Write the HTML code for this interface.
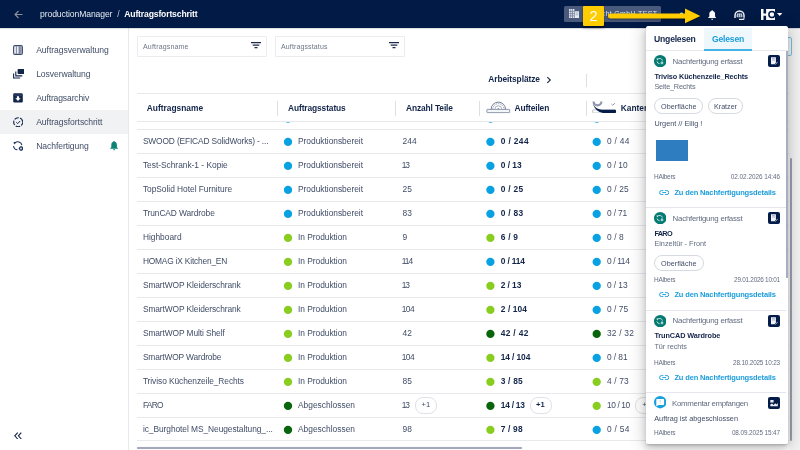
<!DOCTYPE html>
<html lang="de"><head><meta charset="utf-8"><title>productionManager / Auftragsfortschritt</title>
<style>
*{box-sizing:border-box;margin:0;padding:0}
html,body{width:800px;height:450px;overflow:hidden;background:#fff}
body{font-family:"Liberation Sans",sans-serif;font-size:8.4px;color:#414d66;position:relative}
.abs{position:absolute}
.tx{position:absolute;white-space:pre}
#wrap{position:absolute;left:0;top:0;width:800px;height:450px;will-change:transform}
#hdr{position:absolute;left:0;top:0;width:800px;height:27.6px;background:#011a46;box-shadow:0 0 1.5px rgba(20,20,60,.5)}
#side{position:absolute;left:0;top:0;width:128.5px;height:450px;background:#fff;border-right:1px solid #e6e8ec}
.navact{position:absolute;left:0;top:110px;width:128px;height:23.5px;background:#f1f2f4}
#main{position:absolute;left:129px;top:27px;width:671px;height:423px;background:#fff}
.flt{position:absolute;top:36px;height:20.5px;width:130px;border:1px solid #eaecf0;border-radius:1px;background:#fff}
.fbtn{position:absolute;left:740px;top:37px;width:51.5px;height:18.5px;border:1px solid #74c3e8;border-radius:2px;background:#f6f7f8}
#tbl{position:absolute;left:0;top:0;width:800px;height:450px}
.hline{position:absolute;left:136.5px;height:1px;background:#e8e9ec;width:652.3px}
.vsep{position:absolute;width:1px;background:#dcdfe5}
.dot{position:absolute;width:8.4px;height:8.4px;border-radius:50%}
.dot.b{background:#16a1e2}.dot.g{background:#8ccb22}.dot.d{background:#0a640c}
.chip{position:absolute;height:16.6px;width:22px;border:1px solid #dfe1e6;border-radius:8px;background:#fff}
.hscroll{position:absolute;left:137px;top:446.6px;width:385px;height:2px;border-radius:1px;background:#a3a9bb;box-shadow:0 0 1px #c5c9d6}
#pop{position:absolute;left:646px;top:26.3px;width:142px;height:417.3px;background:#fff;border-radius:2px;box-shadow:0 2px 3px -1px rgba(0,0,0,.22),0 4px 7px 1px rgba(0,0,0,.13),0 1px 16px 3px rgba(0,0,0,.16);overflow:hidden}
.tabact{background:#eef7fc}.tabline{background:#e6e8ec}.tabul{background:#45b2e6}
.pchip{border:1px solid #d5d9e0;border-radius:8px;background:#fff}
.psep{background:#e4e6eb}
.pimg{background:#2f7dc1}
.ptrack{background:#e9ebf1}.pthumb{background:#a7aec3}
.pill{position:absolute;left:564.2px;top:6px;width:97.3px;height:16px;border-radius:1.6px;background:#4a5a7c}
.ybox{border-radius:1px;position:absolute;left:583.4px;top:6px;width:20.5px;height:20.2px;background:#ffcc00;box-shadow:0 1.5px 3px rgba(0,0,0,.4)}
.ybox span{position:absolute;left:0;width:20.5px;top:1.9px;text-align:center;font-size:14.6px;line-height:16px;color:#fff}
.vscroll{position:absolute;left:790px;top:157.5px;width:2.2px;height:283px;background:#9ca1b3;border-radius:1px}
.rstrip{position:absolute;left:789px;top:27px;width:11px;height:423px;background:linear-gradient(90deg,#fafafa,#f2f2f2 40%)}
</style></head><body>
<div id="wrap">
<div id="main"></div><div class="rstrip"></div>
<div id="side">
<div class="navact"></div>
<span class="tx" style="top:45.00px;font-size:8.6px;line-height:10px;left:36.20px;color:#414d66;letter-spacing:-0.063px;">Auftragsverwaltung</span>
<span class="tx" style="top:69.20px;font-size:8.6px;line-height:10px;left:36.20px;color:#414d66;letter-spacing:-0.098px;">Losverwaltung</span>
<span class="tx" style="top:93.00px;font-size:8.6px;line-height:10px;left:36.20px;color:#414d66;letter-spacing:-0.149px;">Auftragsarchiv</span>
<span class="tx" style="top:117.00px;font-size:8.6px;line-height:10px;left:36.20px;color:#414d66;letter-spacing:-0.061px;">Auftragsfortschritt</span>
<span class="tx" style="top:141.20px;font-size:8.6px;line-height:10px;left:36.20px;color:#414d66;letter-spacing:-0.085px;">Nachfertigung</span>
<svg class="abs" style="left:13px;top:45px" width="10" height="10" viewBox="0 0 10 10"><rect x=".6" y=".6" width="8.8" height="8.8" rx="1.3" fill="#eef0f5" stroke="#3d4b70" stroke-width="1.1"/><rect x="6.1" y="1.2" width="2.7" height="7.6" fill="#8c96ad"/><path d="M3.4 1.2V8.8M6.1 1.2V8.8" stroke="#5d6a88" stroke-width=".8"/></svg>
<svg class="abs" style="left:12.5px;top:69px" width="11.5" height="9.6" viewBox="0 0 11.5 9.6"><rect x="4.6" y="0" width="6.9" height="5" rx=".8" fill="#13254a"/><path d="M2.8 2.4V6.9H9.3M.6 4.6V9H7.2" stroke="#13254a" stroke-width="1.1" fill="none"/></svg>
<svg class="abs" style="left:13px;top:93px" width="10" height="9.6" viewBox="0 0 10 9.6"><rect x=".2" y=".2" width="9.6" height="9.2" rx="1.2" fill="#13254a"/><path d="M.8 2.1H9.2" stroke="#41517a" stroke-width=".8"/><path d="M3.9 3.3H6.1V5.2H7.7L5 7.9L2.3 5.2H3.9Z" fill="#fff"/></svg>
<svg class="abs" style="left:12.8px;top:116.8px" width="10.4" height="10.4" viewBox="0 0 10.4 10.4"><circle cx="5.2" cy="5.2" r="4.5" fill="none" stroke="#13254a" stroke-width="1.1" stroke-dasharray="4.6 1.3" stroke-dashoffset="1"/><path d="M3.3 5.3L4.7 6.6L7.2 4" stroke="#13254a" stroke-width="1" fill="none"/></svg>
<svg class="abs" style="left:12.8px;top:140.5px" width="10.6" height="10.6" viewBox="0 0 10.6 10.6"><path d="M1.9 2.1A4.1 4.1 0 0 1 8.9 4.2M.6 5A4.1 4.1 0 0 0 4.4 8.8" stroke="#1d3260" stroke-width="1.05" fill="none"/><path d="M.6 .9L3.1 1.3L1 3.4Z" fill="#13254a"/><circle cx="8" cy="7.5" r="1.55" fill="#fff" stroke="#1d3260" stroke-width="1.2"/><path d="M8 5.2V9.8M5.7 7.5H10.3" stroke="#1d3260" stroke-width=".7"/><circle cx="8" cy="7.5" r=".8" fill="#fff"/></svg>
<svg class="abs" style="left:110.2px;top:141.2px" width="8.2" height="9.4" viewBox="0 0 8.2 9.4"><path d="M4.1 0C4.6 0 4.9 .3 4.9 .8C6.2 1.2 6.9 2.3 6.9 3.8V6.2L8 7.3V7.8H.2V7.3L1.3 6.2V3.8C1.3 2.3 2 1.2 3.3 .8C3.3 .3 3.6 0 4.1 0ZM3.1 8.3H5.1C5.1 8.9 4.7 9.3 4.1 9.3C3.5 9.3 3.1 8.9 3.1 8.3Z" fill="#0b8374"/></svg>
<svg class="abs" style="left:14px;top:431.5px" width="8" height="7.6" viewBox="0 0 8 7.6"><path d="M3.7 .6L.8 3.8L3.7 7M7.3 .6L4.4 3.8L7.3 7" stroke="#13254a" stroke-width="1.1" fill="none"/></svg>

</div>
<div class="flt" style="left:136.5px"></div><div class="flt" style="left:274.5px"></div>
<span class="tx" style="top:42.60px;font-size:7px;line-height:8px;left:143.00px;color:#6c7688;letter-spacing:0.173px;">Auftragsname</span>
<span class="tx" style="top:42.60px;font-size:7px;line-height:8px;left:281.00px;color:#6c7688;letter-spacing:0.127px;">Auftragsstatus</span>
<svg class="abs" style="left:251px;top:42.4px" width="10" height="7" viewBox="0 0 10 7"><path d="M0 .7H10M1.7 3.2H8.3M3.5 5.7H6.5" stroke="#1c2b4a" stroke-width="1.3" fill="none"/></svg>
<svg class="abs" style="left:388.8px;top:42.4px" width="10" height="7" viewBox="0 0 10 7"><path d="M0 .7H10M1.7 3.2H8.3M3.5 5.7H6.5" stroke="#1c2b4a" stroke-width="1.3" fill="none"/></svg>
<div class="fbtn"></div>
<div id="tbl">
<div class="hline" style="top:93px"></div><div class="hline" style="top:121px"></div><div class="hline" style="top:129px"></div>
<div class="vsep" style="left:277.0px;top:101px;height:15px"></div>
<div class="vsep" style="left:395.0px;top:101px;height:15px"></div>
<div class="vsep" style="left:479.0px;top:101px;height:15px"></div>
<div class="vsep" style="left:585.5px;top:101px;height:15px"></div>
<div class="vsep" style="left:585.5px;top:74px;height:12.5px"></div>
<span class="tx" style="top:102.50px;font-size:8.4px;line-height:10px;left:146.75px;font-weight:700;color:#13254a;">Auftragsname</span>
<span class="tx" style="top:102.50px;font-size:8.4px;line-height:10px;left:288.00px;font-weight:700;color:#13254a;letter-spacing:-0.105px;">Auftragsstatus</span>
<span class="tx" style="top:102.50px;font-size:8.4px;line-height:10px;left:406.00px;font-weight:700;color:#13254a;letter-spacing:-0.114px;">Anzahl Teile</span>
<span class="tx" style="top:74.00px;font-size:8.4px;line-height:10px;left:488.25px;font-weight:700;color:#13254a;letter-spacing:-0.070px;">Arbeitsplätze</span>
<span class="tx" style="top:102.50px;font-size:8.4px;line-height:10px;left:514.50px;font-weight:700;color:#13254a;letter-spacing:-0.135px;">Aufteilen</span>
<span class="tx" style="top:102.50px;font-size:8.4px;line-height:10px;left:620.75px;font-weight:700;color:#13254a;">Kanten</span>
<svg class="abs" style="left:546px;top:75.5px" width="6" height="8" viewBox="0 0 6 8"><path d="M1.3 1.2L4.3 4L1.3 6.8" stroke="#13254a" stroke-width="1.1" fill="none"/></svg>
<svg class="abs" style="left:485.5px;top:101px" width="25" height="12.5" viewBox="0 0 25 12.5"><rect x=".9" y="8.4" width="22.8" height="3.2" rx=".4" fill="#f4f5f8" stroke="#77819a" stroke-width=".8"/><path d="M5.1 8.3A7.2 7.2 0 0 1 19.5 8.3" fill="none" stroke="#66718b" stroke-width=".9"/><path d="M6.7 8.3A5.6 5.6 0 0 1 17.9 8.3" fill="none" stroke="#7a849c" stroke-width=".8" stroke-dasharray="1.3 .8"/><path d="M8.8 8.3A3.5 3.5 0 0 1 15.8 8.3" fill="none" stroke="#8690a6" stroke-width=".7"/><circle cx="12.3" cy="7.7" r=".7" fill="#7a849c"/></svg>
<svg class="abs" style="left:592px;top:100.5px" width="24.5" height="12.5" viewBox="0 0 24.5 12.5"><rect x=".6" y="8.9" width="23" height="3.1" rx=".8" fill="#fff" stroke="#a5adc0" stroke-width=".7"/><path d="M1.6 .4A3.9 3.9 0 0 0 9.4 .4" fill="none" stroke="#8f98b0" stroke-width="2.2"/><path d="M.6 .8C1.4 5.8 5.5 8.5 10 8.7H23.2A.8 .8 0 0 1 24 9.5V11.2A.8 .8 0 0 1 23.2 12H11C6.5 11.4 1.6 8 .6 .8Z" fill="#041c49"/><path d="M19.4 3L20.7 4.2L23 2.2" stroke="#6f7a93" stroke-width=".8" fill="none"/></svg>

<svg class="abs" style="left:283px;top:113px" width="12" height="12"><clipPath id="c288"><rect x="0" y="9.00" width="12" height="12"/></clipPath><circle cx="5.00" cy="5.60" r="4.15" fill="#08a1e1" clip-path="url(#c288)"/></svg>
<svg class="abs" style="left:485px;top:113px" width="12" height="12"><clipPath id="c490"><rect x="0" y="9.00" width="12" height="12"/></clipPath><circle cx="5.50" cy="5.60" r="4.15" fill="#08a1e1" clip-path="url(#c490)"/></svg>
<svg class="abs" style="left:591px;top:113px" width="12" height="12"><clipPath id="c596"><rect x="0" y="9.00" width="12" height="12"/></clipPath><circle cx="5.75" cy="5.60" r="4.15" fill="#08a1e1" clip-path="url(#c596)"/></svg>
<div class="hline" style="top:153px"></div>
<span class="tx" style="top:136.30px;font-size:8.4px;line-height:10px;left:142.90px;color:#414d66;letter-spacing:-0.150px;">SWOOD (EFICAD SolidWorks) - ...</span>
<svg class="abs" style="left:283px;top:136px" width="12" height="12"><circle cx="5.00" cy="5.90" r="4.15" fill="#08a1e1"/></svg>
<span class="tx" style="top:136.30px;font-size:8.4px;line-height:10px;left:298.00px;color:#414d66;letter-spacing:-0.012px;">Produktionsbereit</span>
<span class="tx" style="top:136.30px;font-size:8.4px;line-height:10px;left:402.50px;color:#414d66;letter-spacing:0.133px;">244</span>
<svg class="abs" style="left:485px;top:136px" width="12" height="12"><circle cx="5.40" cy="5.90" r="4.15" fill="#08a1e1"/></svg>
<span class="tx" style="top:136.30px;font-size:8.4px;line-height:10px;left:500.75px;font-weight:700;color:#13254a;letter-spacing:0.363px;">0 / 244</span>
<svg class="abs" style="left:591px;top:136px" width="12" height="12"><circle cx="5.70" cy="5.90" r="4.15" fill="#08a1e1"/></svg>
<span class="tx" style="top:136.30px;font-size:8.4px;line-height:10px;left:607.00px;color:#414d66;letter-spacing:0.266px;">0 / 44</span>
<div class="hline" style="top:177px"></div>
<span class="tx" style="top:160.30px;font-size:8.4px;line-height:10px;left:142.90px;color:#414d66;letter-spacing:-0.014px;">Test-Schrank-1 - Kopie</span>
<svg class="abs" style="left:283px;top:160px" width="12" height="12"><circle cx="5.00" cy="5.90" r="4.15" fill="#08a1e1"/></svg>
<span class="tx" style="top:160.30px;font-size:8.4px;line-height:10px;left:298.00px;color:#414d66;letter-spacing:-0.012px;">Produktionsbereit</span>
<span class="tx" style="top:160.30px;font-size:8.4px;line-height:10px;left:401.80px;color:#414d66;letter-spacing:-1.278px;">13</span>
<svg class="abs" style="left:485px;top:160px" width="12" height="12"><circle cx="5.40" cy="5.90" r="4.15" fill="#08a1e1"/></svg>
<span class="tx" style="top:160.30px;font-size:8.4px;line-height:10px;left:500.75px;font-weight:700;color:#13254a;letter-spacing:-0.034px;">0 / 13</span>
<svg class="abs" style="left:591px;top:160px" width="12" height="12"><circle cx="5.70" cy="5.90" r="4.15" fill="#08a1e1"/></svg>
<span class="tx" style="top:160.30px;font-size:8.4px;line-height:10px;left:607.00px;color:#414d66;letter-spacing:-0.074px;">0 / 10</span>
<div class="hline" style="top:201px"></div>
<span class="tx" style="top:184.30px;font-size:8.4px;line-height:10px;left:142.90px;color:#414d66;letter-spacing:-0.030px;">TopSolid Hotel Furniture</span>
<svg class="abs" style="left:283px;top:184px" width="12" height="12"><circle cx="5.00" cy="5.90" r="4.15" fill="#08a1e1"/></svg>
<span class="tx" style="top:184.30px;font-size:8.4px;line-height:10px;left:298.00px;color:#414d66;letter-spacing:-0.012px;">Produktionsbereit</span>
<span class="tx" style="top:184.30px;font-size:8.4px;line-height:10px;left:402.50px;color:#414d66;letter-spacing:0.172px;">25</span>
<svg class="abs" style="left:485px;top:184px" width="12" height="12"><circle cx="5.40" cy="5.90" r="4.15" fill="#08a1e1"/></svg>
<span class="tx" style="top:184.30px;font-size:8.4px;line-height:10px;left:500.75px;font-weight:700;color:#13254a;letter-spacing:0.266px;">0 / 25</span>
<svg class="abs" style="left:591px;top:184px" width="12" height="12"><circle cx="5.70" cy="5.90" r="4.15" fill="#08a1e1"/></svg>
<span class="tx" style="top:184.30px;font-size:8.4px;line-height:10px;left:607.00px;color:#414d66;letter-spacing:0.146px;">0 / 25</span>
<div class="hline" style="top:225px"></div>
<span class="tx" style="top:208.30px;font-size:8.4px;line-height:10px;left:142.90px;color:#414d66;letter-spacing:-0.099px;">TrunCAD Wardrobe</span>
<svg class="abs" style="left:283px;top:208px" width="12" height="12"><circle cx="5.00" cy="5.90" r="4.15" fill="#08a1e1"/></svg>
<span class="tx" style="top:208.30px;font-size:8.4px;line-height:10px;left:298.00px;color:#414d66;letter-spacing:-0.012px;">Produktionsbereit</span>
<span class="tx" style="top:208.30px;font-size:8.4px;line-height:10px;left:402.50px;color:#414d66;letter-spacing:0.172px;">83</span>
<svg class="abs" style="left:485px;top:208px" width="12" height="12"><circle cx="5.40" cy="5.90" r="4.15" fill="#08a1e1"/></svg>
<span class="tx" style="top:208.30px;font-size:8.4px;line-height:10px;left:500.75px;font-weight:700;color:#13254a;letter-spacing:0.266px;">0 / 83</span>
<svg class="abs" style="left:591px;top:208px" width="12" height="12"><circle cx="5.70" cy="5.90" r="4.15" fill="#08a1e1"/></svg>
<span class="tx" style="top:208.30px;font-size:8.4px;line-height:10px;left:607.00px;color:#414d66;letter-spacing:-0.174px;">0 / 71</span>
<div class="hline" style="top:249px"></div>
<span class="tx" style="top:232.30px;font-size:8.4px;line-height:10px;left:142.90px;color:#414d66;">Highboard</span>
<svg class="abs" style="left:283px;top:232px" width="12" height="12"><circle cx="5.00" cy="5.90" r="4.15" fill="#89cd20"/></svg>
<span class="tx" style="top:232.30px;font-size:8.4px;line-height:10px;left:298.00px;color:#414d66;letter-spacing:-0.030px;">In Produktion</span>
<span class="tx" style="top:232.30px;font-size:8.4px;line-height:10px;left:402.50px;color:#414d66;letter-spacing:0.078px;">9</span>
<svg class="abs" style="left:485px;top:232px" width="12" height="12"><circle cx="5.40" cy="5.90" r="4.15" fill="#89cd20"/></svg>
<span class="tx" style="top:232.30px;font-size:8.4px;line-height:10px;left:500.75px;font-weight:700;color:#13254a;letter-spacing:0.226px;">6 / 9</span>
<svg class="abs" style="left:591px;top:232px" width="12" height="12"><circle cx="5.70" cy="5.90" r="4.15" fill="#08a1e1"/></svg>
<span class="tx" style="top:232.30px;font-size:8.4px;line-height:10px;left:607.00px;color:#414d66;letter-spacing:0.101px;">0 / 8</span>
<div class="hline" style="top:273px"></div>
<span class="tx" style="top:256.30px;font-size:8.4px;line-height:10px;left:142.90px;color:#414d66;letter-spacing:-0.198px;">HOMAG iX Kitchen_EN</span>
<svg class="abs" style="left:283px;top:256px" width="12" height="12"><circle cx="5.00" cy="5.90" r="4.15" fill="#89cd20"/></svg>
<span class="tx" style="top:256.30px;font-size:8.4px;line-height:10px;left:298.00px;color:#414d66;letter-spacing:-0.030px;">In Produktion</span>
<span class="tx" style="top:256.30px;font-size:8.4px;line-height:10px;left:401.80px;color:#414d66;letter-spacing:-1.005px;">114</span>
<svg class="abs" style="left:485px;top:256px" width="12" height="12"><circle cx="5.40" cy="5.90" r="4.15" fill="#08a1e1"/></svg>
<span class="tx" style="top:256.30px;font-size:8.4px;line-height:10px;left:500.75px;font-weight:700;color:#13254a;letter-spacing:-0.159px;">0 / 114</span>
<svg class="abs" style="left:591px;top:256px" width="12" height="12"><circle cx="5.70" cy="5.90" r="4.15" fill="#08a1e1"/></svg>
<span class="tx" style="top:256.30px;font-size:8.4px;line-height:10px;left:607.00px;color:#414d66;letter-spacing:-0.367px;">0 / 114</span>
<div class="hline" style="top:297px"></div>
<span class="tx" style="top:280.30px;font-size:8.4px;line-height:10px;left:142.90px;color:#414d66;letter-spacing:-0.092px;">SmartWOP Kleiderschrank</span>
<svg class="abs" style="left:283px;top:280px" width="12" height="12"><circle cx="5.00" cy="5.90" r="4.15" fill="#89cd20"/></svg>
<span class="tx" style="top:280.30px;font-size:8.4px;line-height:10px;left:298.00px;color:#414d66;letter-spacing:-0.030px;">In Produktion</span>
<span class="tx" style="top:280.30px;font-size:8.4px;line-height:10px;left:401.80px;color:#414d66;letter-spacing:-1.278px;">13</span>
<svg class="abs" style="left:485px;top:280px" width="12" height="12"><circle cx="5.40" cy="5.90" r="4.15" fill="#89cd20"/></svg>
<span class="tx" style="top:280.30px;font-size:8.4px;line-height:10px;left:500.75px;font-weight:700;color:#13254a;letter-spacing:-0.074px;">2 / 13</span>
<svg class="abs" style="left:591px;top:280px" width="12" height="12"><circle cx="5.70" cy="5.90" r="4.15" fill="#08a1e1"/></svg>
<span class="tx" style="top:280.30px;font-size:8.4px;line-height:10px;left:607.00px;color:#414d66;letter-spacing:-0.074px;">0 / 13</span>
<div class="hline" style="top:321px"></div>
<span class="tx" style="top:304.30px;font-size:8.4px;line-height:10px;left:142.90px;color:#414d66;letter-spacing:-0.092px;">SmartWOP Kleiderschrank</span>
<svg class="abs" style="left:283px;top:304px" width="12" height="12"><circle cx="5.00" cy="5.90" r="4.15" fill="#89cd20"/></svg>
<span class="tx" style="top:304.30px;font-size:8.4px;line-height:10px;left:298.00px;color:#414d66;letter-spacing:-0.030px;">In Produktion</span>
<span class="tx" style="top:304.30px;font-size:8.4px;line-height:10px;left:401.80px;color:#414d66;letter-spacing:-0.592px;">104</span>
<svg class="abs" style="left:485px;top:304px" width="12" height="12"><circle cx="5.40" cy="5.90" r="4.15" fill="#89cd20"/></svg>
<span class="tx" style="top:304.30px;font-size:8.4px;line-height:10px;left:500.75px;font-weight:700;color:#13254a;letter-spacing:0.096px;">2 / 104</span>
<svg class="abs" style="left:591px;top:304px" width="12" height="12"><circle cx="5.70" cy="5.90" r="4.15" fill="#08a1e1"/></svg>
<span class="tx" style="top:304.30px;font-size:8.4px;line-height:10px;left:607.00px;color:#414d66;letter-spacing:0.046px;">0 / 75</span>
<div class="hline" style="top:345px"></div>
<span class="tx" style="top:328.30px;font-size:8.4px;line-height:10px;left:142.90px;color:#414d66;letter-spacing:-0.091px;">SmartWOP Multi Shelf</span>
<svg class="abs" style="left:283px;top:328px" width="12" height="12"><circle cx="5.00" cy="5.90" r="4.15" fill="#89cd20"/></svg>
<span class="tx" style="top:328.30px;font-size:8.4px;line-height:10px;left:298.00px;color:#414d66;letter-spacing:-0.030px;">In Produktion</span>
<span class="tx" style="top:328.30px;font-size:8.4px;line-height:10px;left:402.50px;color:#414d66;letter-spacing:0.172px;">42</span>
<svg class="abs" style="left:485px;top:328px" width="12" height="12"><circle cx="5.40" cy="5.90" r="4.15" fill="#09650b"/></svg>
<span class="tx" style="top:328.30px;font-size:8.4px;line-height:10px;left:500.75px;font-weight:700;color:#13254a;letter-spacing:0.321px;">42 / 42</span>
<svg class="abs" style="left:591px;top:328px" width="12" height="12"><circle cx="5.70" cy="5.90" r="4.15" fill="#09650b"/></svg>
<span class="tx" style="top:328.30px;font-size:8.4px;line-height:10px;left:607.00px;color:#414d66;letter-spacing:0.213px;">32 / 32</span>
<div class="hline" style="top:369px"></div>
<span class="tx" style="top:352.30px;font-size:8.4px;line-height:10px;left:142.90px;color:#414d66;letter-spacing:-0.146px;">SmartWOP Wardrobe</span>
<svg class="abs" style="left:283px;top:352px" width="12" height="12"><circle cx="5.00" cy="5.90" r="4.15" fill="#89cd20"/></svg>
<span class="tx" style="top:352.30px;font-size:8.4px;line-height:10px;left:298.00px;color:#414d66;letter-spacing:-0.030px;">In Produktion</span>
<span class="tx" style="top:352.30px;font-size:8.4px;line-height:10px;left:401.80px;color:#414d66;letter-spacing:-0.592px;">104</span>
<svg class="abs" style="left:485px;top:352px" width="12" height="12"><circle cx="5.40" cy="5.90" r="4.15" fill="#89cd20"/></svg>
<span class="tx" style="top:352.30px;font-size:8.4px;line-height:10px;left:500.75px;font-weight:700;color:#13254a;letter-spacing:-0.097px;">14 / 104</span>
<svg class="abs" style="left:591px;top:352px" width="12" height="12"><circle cx="5.70" cy="5.90" r="4.15" fill="#08a1e1"/></svg>
<span class="tx" style="top:352.30px;font-size:8.4px;line-height:10px;left:607.00px;color:#414d66;letter-spacing:-0.074px;">0 / 81</span>
<div class="hline" style="top:393px"></div>
<span class="tx" style="top:376.30px;font-size:8.4px;line-height:10px;left:142.90px;color:#414d66;letter-spacing:-0.075px;">Triviso Küchenzeile_Rechts</span>
<svg class="abs" style="left:283px;top:376px" width="12" height="12"><circle cx="5.00" cy="5.90" r="4.15" fill="#89cd20"/></svg>
<span class="tx" style="top:376.30px;font-size:8.4px;line-height:10px;left:298.00px;color:#414d66;letter-spacing:-0.030px;">In Produktion</span>
<span class="tx" style="top:376.30px;font-size:8.4px;line-height:10px;left:402.50px;color:#414d66;letter-spacing:0.172px;">85</span>
<svg class="abs" style="left:485px;top:376px" width="12" height="12"><circle cx="5.40" cy="5.90" r="4.15" fill="#89cd20"/></svg>
<span class="tx" style="top:376.30px;font-size:8.4px;line-height:10px;left:500.75px;font-weight:700;color:#13254a;letter-spacing:0.186px;">3 / 85</span>
<svg class="abs" style="left:591px;top:376px" width="12" height="12"><circle cx="5.70" cy="5.90" r="4.15" fill="#89cd20"/></svg>
<span class="tx" style="top:376.30px;font-size:8.4px;line-height:10px;left:607.00px;color:#414d66;letter-spacing:0.146px;">4 / 73</span>
<div class="hline" style="top:417px"></div>
<span class="tx" style="top:400.30px;font-size:8.4px;line-height:10px;left:142.90px;color:#414d66;letter-spacing:-0.738px;">FARO</span>
<svg class="abs" style="left:283px;top:400px" width="12" height="12"><circle cx="5.00" cy="5.90" r="4.15" fill="#09650b"/></svg>
<span class="tx" style="top:400.30px;font-size:8.4px;line-height:10px;left:298.00px;color:#414d66;letter-spacing:0.016px;">Abgeschlossen</span>
<span class="tx" style="top:400.30px;font-size:8.4px;line-height:10px;left:401.80px;color:#414d66;letter-spacing:-1.278px;">13</span>
<svg class="abs" style="left:485px;top:400px" width="12" height="12"><circle cx="5.40" cy="5.90" r="4.15" fill="#09650b"/></svg>
<span class="tx" style="top:400.30px;font-size:8.4px;line-height:10px;left:500.75px;font-weight:700;color:#13254a;letter-spacing:-0.238px;">14 / 13</span>
<svg class="abs" style="left:591px;top:400px" width="12" height="12"><circle cx="5.70" cy="5.90" r="4.15" fill="#89cd20"/></svg>
<span class="tx" style="top:400.30px;font-size:8.4px;line-height:10px;left:607.00px;color:#414d66;letter-spacing:-0.404px;">10 / 10</span>
<span class="chip" style="left:415px;top:397.10px"></span><span class="tx" style="top:400.30px;font-size:7.6px;line-height:10px;left:421.50px;color:#414d66;">+1</span>
<span class="chip" style="left:530px;top:397.10px"></span><span class="tx" style="top:400.30px;font-size:7.6px;line-height:10px;left:536.00px;font-weight:700;color:#13254a;">+1</span>
<span class="chip" style="left:635px;top:397.10px"></span><span class="tx" style="top:400.30px;font-size:7.6px;line-height:10px;left:642.20px;color:#414d66;">+</span>
<div class="hline" style="top:440.4px"></div>
<span class="tx" style="top:424.30px;font-size:8.4px;line-height:10px;left:142.90px;color:#414d66;letter-spacing:-0.058px;">ic_Burghotel MS_Neugestaltung_...</span>
<svg class="abs" style="left:283px;top:424px" width="12" height="12"><circle cx="5.00" cy="5.90" r="4.15" fill="#09650b"/></svg>
<span class="tx" style="top:424.30px;font-size:8.4px;line-height:10px;left:298.00px;color:#414d66;letter-spacing:0.016px;">Abgeschlossen</span>
<span class="tx" style="top:424.30px;font-size:8.4px;line-height:10px;left:402.50px;color:#414d66;letter-spacing:0.172px;">98</span>
<svg class="abs" style="left:485px;top:424px" width="12" height="12"><circle cx="5.40" cy="5.90" r="4.15" fill="#89cd20"/></svg>
<span class="tx" style="top:424.30px;font-size:8.4px;line-height:10px;left:500.75px;font-weight:700;color:#13254a;letter-spacing:0.166px;">7 / 98</span>
<svg class="abs" style="left:591px;top:424px" width="12" height="12"><circle cx="5.70" cy="5.90" r="4.15" fill="#08a1e1"/></svg>
<span class="tx" style="top:424.30px;font-size:8.4px;line-height:10px;left:607.00px;color:#414d66;letter-spacing:0.266px;">0 / 54</span>
<div class="hscroll"></div><div class="vscroll"></div>
</div>
<div id="hdr">
<svg class="abs" style="left:13.5px;top:9.5px" width="9" height="9" viewBox="0 0 9 9"><path d="M8.5 4.5H1M4.5 1L1 4.5L4.5 8" stroke="#8c8f98" stroke-width="1.1" fill="none"/></svg>
<span class="tx" style="top:8.75px;font-size:8.6px;line-height:10px;left:40.00px;color:#e4e8f0;letter-spacing:-0.098px;">productionManager</span>
<span class="tx" style="top:8.75px;font-size:8.6px;line-height:10px;left:117.20px;color:#c5cbd8;">/</span>
<span class="tx" style="top:8.75px;font-size:8.6px;line-height:10px;left:124.25px;font-weight:700;color:#fff;letter-spacing:-0.148px;">Auftragsfortschritt</span>
<div class="pill"></div>
<svg class="abs" style="left:568.5px;top:9px" width="10.4" height="9.2" viewBox="0 0 10.4 9.2"><path d="M0 0H5.4V2.2H10.4V9.2H0Z" fill="#e8ebf2"/><path d="M1.7 0V9.2M3.5 0V9.2M5.4 2.2V9.2M0 2.3H5.4M0 4.6H5.4M0 6.9H5.4" stroke="#4a5a7c" stroke-width=".55"/><path d="M6.8 4H7.6M8.4 4H9.2M6.8 5.8H7.6M8.4 5.8H9.2" stroke="#4a5a7c" stroke-width=".7"/></svg>
<span class="tx" style="top:9.60px;font-size:7px;line-height:8px;left:583.50px;color:#dfe3ec;letter-spacing:0.349px;">Albrecht GmbH TEST</span>
<svg class="abs" style="left:679px;top:11px" width="5" height="4" viewBox="0 0 5 4"><path d="M.5 3.4A2 2 0 0 1 4.5 3.4Z" fill="#e6e9f0"/></svg>
<svg class="abs" style="left:707.6px;top:10px" width="8.4" height="9.9" viewBox="0 0 8.2 9.4"><path d="M4.1 0C4.6 0 4.9 .3 4.9 .8C6.2 1.2 6.9 2.3 6.9 3.8V6.2L8 7.3V7.8H.2V7.3L1.3 6.2V3.8C1.3 2.3 2 1.2 3.3 .8C3.3 .3 3.6 0 4.1 0ZM3.1 8.3H5.1C5.1 8.9 4.7 9.3 4.1 9.3C3.5 9.3 3.1 8.9 3.1 8.3Z" fill="#fff"/></svg>
<svg class="abs" style="left:734.4px;top:9.6px" width="11" height="10.6" viewBox="0 0 11 10.6"><path d="M1 7.9V5.4A4.5 4.5 0 0 1 10 5.4V7.6" fill="none" stroke="#f4f6fa" stroke-width="1.5"/><path d="M2.6 7.2V5.6A2.9 2.9 0 0 1 8.4 5.6V7.2Z" fill="#c9cfdd"/><path d="M4 4.3L5.5 3L7 4.3" stroke="#011a46" stroke-width=".8" fill="none"/><circle cx="4.4" cy="5.9" r=".55" fill="#011a46"/><circle cx="6.6" cy="5.9" r=".55" fill="#011a46"/><path d="M10 7.4V8.4A1 1 0 0 1 9 9.4H5" fill="none" stroke="#f4f6fa" stroke-width="1.1"/></svg>
<svg class="abs" style="left:760.8px;top:9px" width="14" height="11" viewBox="0 0 14 11" role="img" aria-label="HC"><path d="M0 0H2.5V4.4H5.1V0H14V11H5.1V6.7H2.5V11H0Z" fill="#fff"/><circle cx="10.9" cy="5.55" r="3" fill="none" stroke="#011a46" stroke-width="1.5"/></svg>
<svg class="abs" style="left:777.2px;top:12.8px" width="5.4" height="3" viewBox="0 0 5.4 3"><path d="M0 0H5.4L2.7 2.9Z" fill="#fff"/></svg>
</div>
<div id="pop">
<div class="tabact" style="position:absolute;left:58.00px;top:1.60px;width:48px;height:22.4px;"></div>
<div class="tabline" style="position:absolute;left:0.00px;top:23.70px;width:142px;height:1px;"></div>
<div class="tabul" style="position:absolute;left:58.00px;top:22.70px;width:48px;height:1.7px;"></div>
<span class="tx" style="top:7.80px;font-size:8.6px;line-height:10px;left:8.10px;font-weight:700;color:#13254a;letter-spacing:-0.221px;">Ungelesen</span>
<span class="tx" style="top:7.80px;font-size:8.6px;line-height:10px;left:66.00px;font-weight:700;color:#1b9ddb;letter-spacing:-0.192px;">Gelesen</span>
<svg class="abs" style="left:7.80px;top:28.40px" width="12.4" height="12.4" viewBox="0 0 12.4 12.4"><circle cx="6.2" cy="6.2" r="6.2" fill="#047a72"/><path d="M3.4 4.8A2.7 2.7 0 0 1 8.4 5.6M3 6.4A2.7 2.7 0 0 0 5.6 8.7" stroke="#d3ece9" stroke-width="0.85" fill="none"/><path d="M2.6 3.3L4.6 3.7L3 5.3Z" fill="#e6f4f2"/><circle cx="8" cy="7.9" r="1.35" fill="#cfe9e6"/><circle cx="8" cy="7.9" r=".5" fill="#047a72"/></svg>
<span class="tx" style="top:30.70px;font-size:7.9px;line-height:10px;left:26.60px;color:#626c80;letter-spacing:-0.250px;">Nachfertigung erfasst</span>
<svg class="abs" style="left:122.00px;top:28.50px" width="12" height="12" viewBox="0 0 12 12"><rect width="12" height="12" rx="2" fill="#041c49"/><path d="M3 2.3H7.9V7.4L6.6 9.2H3Z" fill="#f2f4f8"/><path d="M4 3.6H6.9M4 5H6.9" stroke="#8b97b3" stroke-width=".7"/><path d="M7.3 9.6L9.6 6.9" stroke="#aab3c9" stroke-width="1"/></svg>
<span class="tx" style="top:45.30px;font-size:7.3px;line-height:10px;left:8.40px;font-weight:700;color:#13254a;letter-spacing:-0.109px;">Triviso Küchenzeile_Rechts</span>
<span class="tx" style="top:56.10px;font-size:7.3px;line-height:10px;left:8.40px;color:#626c80;letter-spacing:-0.201px;">Seite_Rechts</span>
<div class="pchip" style="position:absolute;left:8.40px;top:72.00px;width:48.8px;height:15.5px;"></div><span class="tx" style="top:75.40px;font-size:7.2px;line-height:10px;left:15.00px;color:#414d66;letter-spacing:0.048px;">Oberfläche</span>
<div class="pchip" style="position:absolute;left:61.80px;top:72.00px;width:35.5px;height:15.5px;"></div><span class="tx" style="top:75.40px;font-size:7.2px;line-height:10px;left:68.00px;color:#414d66;letter-spacing:-0.029px;">Kratzer</span>
<span class="tx" style="top:92.70px;font-size:7.3px;line-height:10px;left:8.40px;color:#414d66;">Urgent // Eilig !</span>
<div class="pimg" style="position:absolute;left:10.00px;top:113.70px;width:32px;height:21px;"></div>
<span class="tx" style="top:147.10px;font-size:6.5px;line-height:8px;left:8.00px;color:#626c80;letter-spacing:-0.254px;">HAlbers</span><span class="tx" style="top:147.10px;font-size:6.4px;line-height:8px;left:84.80px;color:#626c80;letter-spacing:-0.031px;">02.02.2026 14:46</span>
<svg class="abs" style="left:13.00px;top:163.60px" width="10.4" height="5.2" viewBox="0 0 10.4 5.2"><path d="M4.3 .6H2.6A2 2 0 0 0 2.6 4.6H4.3M6.1 .6H7.8A2 2 0 0 1 7.8 4.6H6.1M3.3 2.6H7.1" stroke="#1b9ddb" stroke-width="1" fill="none"/></svg><span class="tx" style="top:161.60px;font-size:7.5px;line-height:10px;left:28.40px;font-weight:700;color:#1b9ddb;letter-spacing:-0.142px;">Zu den Nachfertigungsdetails</span>
<div class="psep" style="position:absolute;left:0.00px;top:181.00px;width:140px;height:1px;"></div>
<svg class="abs" style="left:7.80px;top:185.50px" width="12.4" height="12.4" viewBox="0 0 12.4 12.4"><circle cx="6.2" cy="6.2" r="6.2" fill="#047a72"/><path d="M3.4 4.8A2.7 2.7 0 0 1 8.4 5.6M3 6.4A2.7 2.7 0 0 0 5.6 8.7" stroke="#d3ece9" stroke-width="0.85" fill="none"/><path d="M2.6 3.3L4.6 3.7L3 5.3Z" fill="#e6f4f2"/><circle cx="8" cy="7.9" r="1.35" fill="#cfe9e6"/><circle cx="8" cy="7.9" r=".5" fill="#047a72"/></svg>
<span class="tx" style="top:187.70px;font-size:7.9px;line-height:10px;left:26.60px;color:#626c80;letter-spacing:-0.250px;">Nachfertigung erfasst</span>
<svg class="abs" style="left:122.00px;top:185.70px" width="12" height="12" viewBox="0 0 12 12"><rect width="12" height="12" rx="2" fill="#041c49"/><path d="M3 2.3H7.9V7.4L6.6 9.2H3Z" fill="#f2f4f8"/><path d="M4 3.6H6.9M4 5H6.9" stroke="#8b97b3" stroke-width=".7"/><path d="M7.3 9.6L9.6 6.9" stroke="#aab3c9" stroke-width="1"/></svg>
<span class="tx" style="top:202.40px;font-size:7.3px;line-height:10px;left:8.40px;font-weight:700;color:#13254a;letter-spacing:-0.694px;">FARO</span>
<span class="tx" style="top:213.10px;font-size:7.3px;line-height:10px;left:8.40px;color:#626c80;letter-spacing:-0.019px;">Einzeltür - Front</span>
<div class="pchip" style="position:absolute;left:7.80px;top:229.10px;width:49.8px;height:15.5px;"></div><span class="tx" style="top:232.50px;font-size:7.2px;line-height:10px;left:15.00px;color:#414d66;letter-spacing:0.048px;">Oberfläche</span>
<span class="tx" style="top:249.80px;font-size:6.5px;line-height:8px;left:8.00px;color:#626c80;letter-spacing:-0.254px;">HAlbers</span><span class="tx" style="top:249.80px;font-size:6.4px;line-height:8px;left:88.10px;color:#626c80;letter-spacing:-0.251px;">29.01.2026 10:01</span>
<svg class="abs" style="left:13.00px;top:265.90px" width="10.4" height="5.2" viewBox="0 0 10.4 5.2"><path d="M4.3 .6H2.6A2 2 0 0 0 2.6 4.6H4.3M6.1 .6H7.8A2 2 0 0 1 7.8 4.6H6.1M3.3 2.6H7.1" stroke="#1b9ddb" stroke-width="1" fill="none"/></svg><span class="tx" style="top:263.90px;font-size:7.5px;line-height:10px;left:28.40px;font-weight:700;color:#1b9ddb;letter-spacing:-0.142px;">Zu den Nachfertigungsdetails</span>
<div class="psep" style="position:absolute;left:0.00px;top:283.80px;width:140px;height:1px;"></div>
<svg class="abs" style="left:7.80px;top:288.70px" width="12.4" height="12.4" viewBox="0 0 12.4 12.4"><circle cx="6.2" cy="6.2" r="6.2" fill="#047a72"/><path d="M3.4 4.8A2.7 2.7 0 0 1 8.4 5.6M3 6.4A2.7 2.7 0 0 0 5.6 8.7" stroke="#d3ece9" stroke-width="0.85" fill="none"/><path d="M2.6 3.3L4.6 3.7L3 5.3Z" fill="#e6f4f2"/><circle cx="8" cy="7.9" r="1.35" fill="#cfe9e6"/><circle cx="8" cy="7.9" r=".5" fill="#047a72"/></svg>
<span class="tx" style="top:289.70px;font-size:7.9px;line-height:10px;left:26.60px;color:#626c80;letter-spacing:-0.250px;">Nachfertigung erfasst</span>
<svg class="abs" style="left:122.00px;top:288.30px" width="12" height="12" viewBox="0 0 12 12"><rect width="12" height="12" rx="2" fill="#041c49"/><path d="M3 2.3H7.9V7.4L6.6 9.2H3Z" fill="#f2f4f8"/><path d="M4 3.6H6.9M4 5H6.9" stroke="#8b97b3" stroke-width=".7"/><path d="M7.3 9.6L9.6 6.9" stroke="#aab3c9" stroke-width="1"/></svg>
<span class="tx" style="top:305.20px;font-size:7.3px;line-height:10px;left:8.40px;font-weight:700;color:#13254a;letter-spacing:-0.096px;">TrunCAD Wardrobe</span>
<span class="tx" style="top:315.30px;font-size:7.3px;line-height:10px;left:8.40px;color:#626c80;letter-spacing:-0.027px;">Tür rechts</span>
<span class="tx" style="top:332.40px;font-size:6.5px;line-height:8px;left:8.00px;color:#626c80;letter-spacing:-0.254px;">HAlbers</span><span class="tx" style="top:332.40px;font-size:6.4px;line-height:8px;left:87.10px;color:#626c80;letter-spacing:-0.184px;">28.10.2025 10:23</span>
<svg class="abs" style="left:13.00px;top:348.40px" width="10.4" height="5.2" viewBox="0 0 10.4 5.2"><path d="M4.3 .6H2.6A2 2 0 0 0 2.6 4.6H4.3M6.1 .6H7.8A2 2 0 0 1 7.8 4.6H6.1M3.3 2.6H7.1" stroke="#1b9ddb" stroke-width="1" fill="none"/></svg><span class="tx" style="top:346.40px;font-size:7.5px;line-height:10px;left:28.40px;font-weight:700;color:#1b9ddb;letter-spacing:-0.142px;">Zu den Nachfertigungsdetails</span>
<div class="psep" style="position:absolute;left:0.00px;top:365.90px;width:140px;height:1px;"></div>
<svg class="abs" style="left:7.80px;top:370.00px" width="12.4" height="12.4" viewBox="0 0 12.4 12.4"><circle cx="6.2" cy="6.2" r="6.2" fill="#189fdf"/><path d="M3 2.9H9.4A.7 .7 0 0 1 10.1 3.6V8.2A.7 .7 0 0 1 9.4 8.9H4.6L2.3 10.6V3.6A.7 .7 0 0 1 3 2.9Z" fill="#fff"/><path d="M6.2 4.3V6.3M6.2 7V7.7" stroke="#8fd0f0" stroke-width=".9"/></svg>
<span class="tx" style="top:372.50px;font-size:7.9px;line-height:10px;left:26.10px;color:#626c80;letter-spacing:-0.359px;">Kommentar empfangen</span>
<svg class="abs" style="left:122.00px;top:370.70px" width="12" height="12" viewBox="0 0 12 12"><rect width="12" height="12" rx="2" fill="#041c49"/><path d="M2.3 3H5.6V5.4H2.3Z" fill="#e9edf5"/><path d="M2.3 9.3V7.6L4 6.6L5.6 8L7.2 6.2L8.4 7.4L9.8 6V9.3Z" fill="#e9edf5"/></svg>
<span class="tx" style="top:388.00px;font-size:7.3px;line-height:10px;left:8.20px;color:#414d66;letter-spacing:0.010px;">Auftrag ist abgeschlossen</span>
<span class="tx" style="top:402.40px;font-size:6.5px;line-height:8px;left:8.00px;color:#626c80;letter-spacing:-0.254px;">HAlbers</span><span class="tx" style="top:402.40px;font-size:6.4px;line-height:8px;left:85.90px;color:#626c80;letter-spacing:-0.104px;">08.09.2025 15:47</span>
<div class="pthumb" style="position:absolute;left:140.00px;top:24.70px;width:2px;height:227px;"></div>
</div>
<svg class="abs" style="left:600px;top:4px;overflow:visible" width="110" height="26" viewBox="600 4 110 26"><g filter="drop-shadow(0 1px 1px rgba(0,0,0,.45))"><path d="M610.5 16.1H687" stroke="#ffcc00" stroke-width="5" stroke-linecap="round" fill="none"/><path d="M685 8.6L700.4 15.9L685 23.2Z" fill="#ffcc00"/></g></svg>
<div class="ybox"><span>2</span></div>

</div>
</body></html>
